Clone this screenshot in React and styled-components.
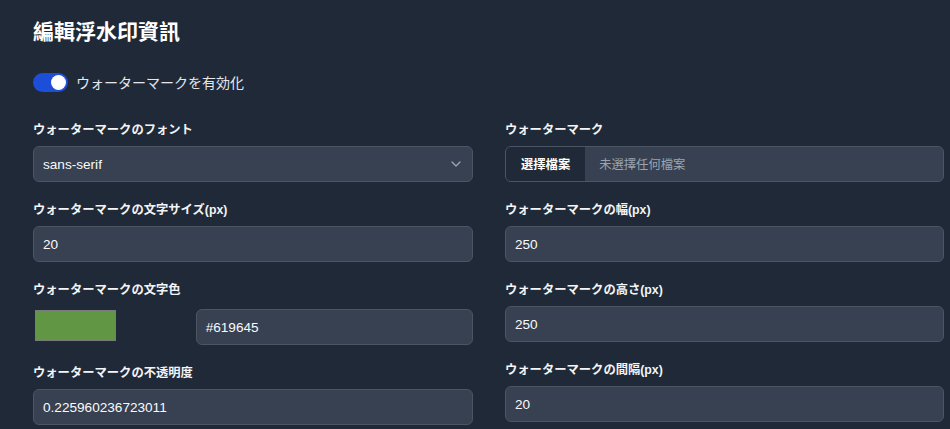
import React from "react";
import styled, { createGlobalStyle } from "styled-components";

const Global = createGlobalStyle`
  html, body { margin: 0; padding: 0; background: #1f2937; }
  body { font-family: "Liberation Sans", "Noto Sans CJK JP", sans-serif; color: #f3f4f6; }
  * { box-sizing: border-box; }
`;

const Page = styled.div`
  width: 950px;
  height: 429px;
  overflow: hidden;
  background: #1f2937;
  padding: 18px 6px 0 33px;
`;

const Title = styled.h2`
  margin: 0;
  font-size: 21px;
  line-height: 28px;
  font-weight: 700;
  color: #ffffff;
  font-family: "Liberation Sans", "Noto Sans CJK TC", sans-serif;
`;

const ToggleRow = styled.label`
  margin-top: 26px;
  display: flex;
  align-items: center;
  gap: 8px;
  height: 20px;
  font-size: 14px;
  color: #e5e7eb;
`;

const Switch = styled.span`
  position: relative;
  width: 35px;
  height: 19px;
  border-radius: 999px;
  background: ${(p) => (p.$on ? "#1d4ed8" : "#4b5563")};
  flex-shrink: 0;
  &::after {
    content: "";
    position: absolute;
    top: 2px;
    left: ${(p) => (p.$on ? "18px" : "2px")};
    width: 15px;
    height: 15px;
    border-radius: 50%;
    background: #ffffff;
  }
`;

const Grid = styled.div`
  margin-top: 30px;
  display: grid;
  grid-template-columns: 440px 439px;
  column-gap: 32px;
  align-items: start;
`;

const Column = styled.div`
  display: flex;
  flex-direction: column;
  gap: 20px;
`;

const Field = styled.div`
  display: flex;
  flex-direction: column;
  gap: 8px;
`;

const Label = styled.div`
  font-size: 12.3px;
  line-height: 16px;
  font-weight: 600;
  color: #f3f4f6;
`;

const Box = styled.div`
  position: relative;
  height: 36px;
  display: flex;
  align-items: center;
  background: #374151;
  border: 1px solid #4b5563;
  border-radius: 6px;
  padding: 0 9px;
  font-size: 13.6px;
  color: #f9fafb;
  overflow: hidden;
`;

const Chevron = styled.svg`
  position: absolute;
  right: 11px;
  top: 50%;
  transform: translateY(-50%);
`;

const FileBox = styled(Box)`
  padding: 0;
`;

const FileButton = styled.span`
  height: 100%;
  display: flex;
  align-items: center;
  padding: 0 15px;
  background: #1f2937;
  font-size: 12.3px;
  font-weight: 700;
  color: #ffffff;
`;

const FilePlaceholder = styled.span`
  margin-left: 14px;
  font-size: 12.3px;
  color: #9ca3af;
`;

const ColorRow = styled.div`
  display: flex;
  align-items: flex-end;
  gap: 16px;
  height: 39px;
`;

const ColorWell = styled.div`
  width: 33.333%;
  height: 39px;
  padding: 4px 2px;
  flex-shrink: 0;
`;

const Swatch = styled.div`
  width: 81px;
  height: 31px;
  background: ${(p) => p.$color};
  border: 1px solid #7a7a7a;
`;

const ColorText = styled(Box)`
  flex: 1;
`;

export default function App() {
  return (
    <Page>
      <Global />
      <Title>編輯浮水印資訊</Title>
      <ToggleRow>
        <Switch $on />
        ウォーターマークを有効化
      </ToggleRow>
      <Grid>
        <Column>
          <Field>
            <Label>ウォーターマークのフォント</Label>
            <Box>
              sans-serif
              <Chevron width="10" height="6" viewBox="0 0 10 6" fill="none">
                <path d="M1 1l4 4 4-4" stroke="#9ca3af" strokeWidth="1.4" strokeLinecap="round" strokeLinejoin="round" />
              </Chevron>
            </Box>
          </Field>
          <Field>
            <Label>ウォーターマークの文字サイズ(px)</Label>
            <Box>20</Box>
          </Field>
          <Field>
            <Label>ウォーターマークの文字色</Label>
            <ColorRow>
              <ColorWell>
                <Swatch $color="#619645" />
              </ColorWell>
              <ColorText>#619645</ColorText>
            </ColorRow>
          </Field>
          <Field>
            <Label>ウォーターマークの不透明度</Label>
            <Box>0.225960236723011</Box>
          </Field>
        </Column>
        <Column>
          <Field>
            <Label>ウォーターマーク</Label>
            <FileBox>
              <FileButton>選擇檔案</FileButton>
              <FilePlaceholder>未選擇任何檔案</FilePlaceholder>
            </FileBox>
          </Field>
          <Field>
            <Label>ウォーターマークの幅(px)</Label>
            <Box>250</Box>
          </Field>
          <Field>
            <Label>ウォーターマークの高さ(px)</Label>
            <Box>250</Box>
          </Field>
          <Field>
            <Label>ウォーターマークの間隔(px)</Label>
            <Box>20</Box>
          </Field>
        </Column>
      </Grid>
    </Page>
  );
}
